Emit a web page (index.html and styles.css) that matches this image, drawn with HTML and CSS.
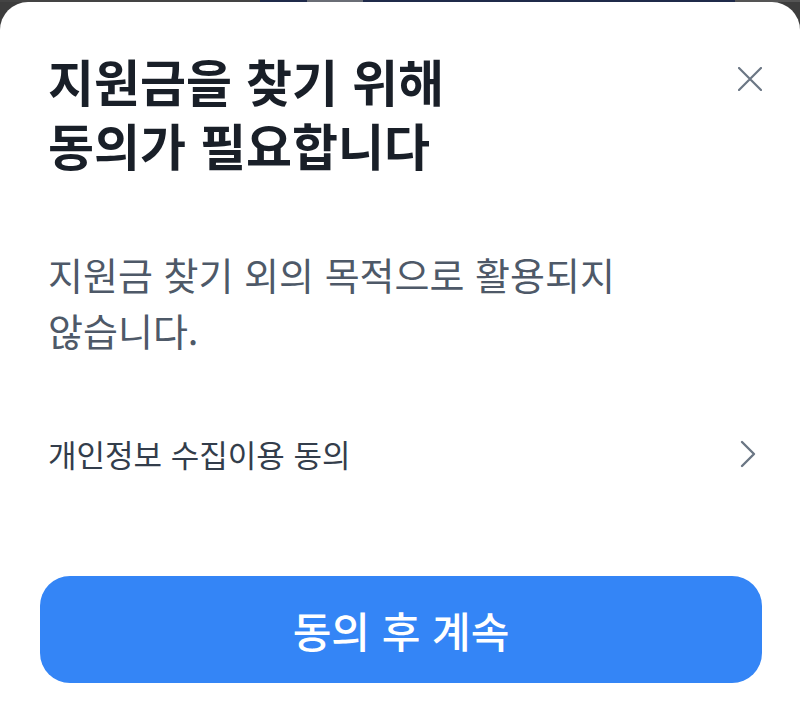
FILE: index.html
```html
<!DOCTYPE html>
<html lang="ko">
<head>
    <meta charset="UTF-8">
    <meta name="viewport" content="width=device-width, initial-scale=1.0">
    <title>동의</title>
    <link rel="stylesheet" href="styles.css">
</head>
<body>
    <div class="backdrop"></div>

    <div class="sheet">
        <div class="sheet-head">
            <h1 class="title">
                <span class="title-line">지원금을 찾기 위해</span>
                <span class="title-line">동의가 필요합니다</span>
            </h1>
            <button class="close" aria-label="닫기">
                <svg width="24" height="24" viewBox="0 0 24 24">
                    <path d="M1 1 L23 23 M23 1 L1 23" stroke="#6b7684" stroke-width="2.2" stroke-linecap="round" fill="none"/>
                </svg>
            </button>
        </div>

        <p class="desc">
            <span class="desc-line">지원금 찾기 외의 목적으로 활용되지</span>
            <span class="desc-line">않습니다.</span>
        </p>

        <div class="agree-row">
            <span>개인정보 수집이용 동의</span>
            <svg width="16" height="28" viewBox="0 0 16 28">
                <path d="M2 2 L14 14 L2 26" stroke="#6b7684" stroke-width="2.4" stroke-linecap="round" stroke-linejoin="round" fill="none"/>
            </svg>
        </div>

        <button class="primary">동의 후 계속</button>
    </div>
</body>
</html>
```

FILE: styles.css
```css
* {
    box-sizing: border-box;
}
body {
    margin: 0;
    background: #3d3d3d;
    font-family: "Noto Sans CJK KR", "Noto Sans", sans-serif;
    overflow: hidden;
}
/* strip of the page behind the sheet */
.backdrop {
    height: 2px;
    background: linear-gradient(to right,
        #444 0, #444 260px,
        #1f2a4a 260px, #1f2a4a 307px,
        #6a6d75 307px, #6a6d75 363px,
        #1f2a4a 363px, #1f2a4a 735px,
        #555 735px);
}
.sheet {
    background: #fff;
    border-radius: 28px 28px 0 0;
    height: 710px;
    padding: 46px 38px 0 48px;
}
.sheet-head {
    display: flex;
    justify-content: space-between;
    align-items: flex-start;
}
.title {
    margin: 0;
    font-size: 50px;
    font-weight: 700;
    color: #191f28;
}
.title-line {
    display: block;
    height: 64px;
    line-height: 64px;
}
.close {
    background: none;
    border: none;
    padding: 0;
    margin-top: 19px;
    width: 24px;
    height: 24px;
    cursor: pointer;
}
.desc {
    margin: 70px 0 0;
    font-size: 38px;
    color: #4e5968;
}
.desc-line {
    display: block;
    height: 56px;
    line-height: 56px;
}
.agree-row {
    display: flex;
    justify-content: space-between;
    align-items: center;
    margin-top: 76px;
    padding-right: 6px;
    font-size: 31px;
    line-height: 40px;
    color: #333d4b;
}
.primary {
    display: block;
    width: 722px;
    height: 107px;
    margin: 102px 0 0 -8px;
    background: #3485f6;
    border: none;
    border-radius: 30px;
    color: #fff;
    font-family: inherit;
    font-size: 42px;
    font-weight: 500;
    cursor: pointer;
}
```
